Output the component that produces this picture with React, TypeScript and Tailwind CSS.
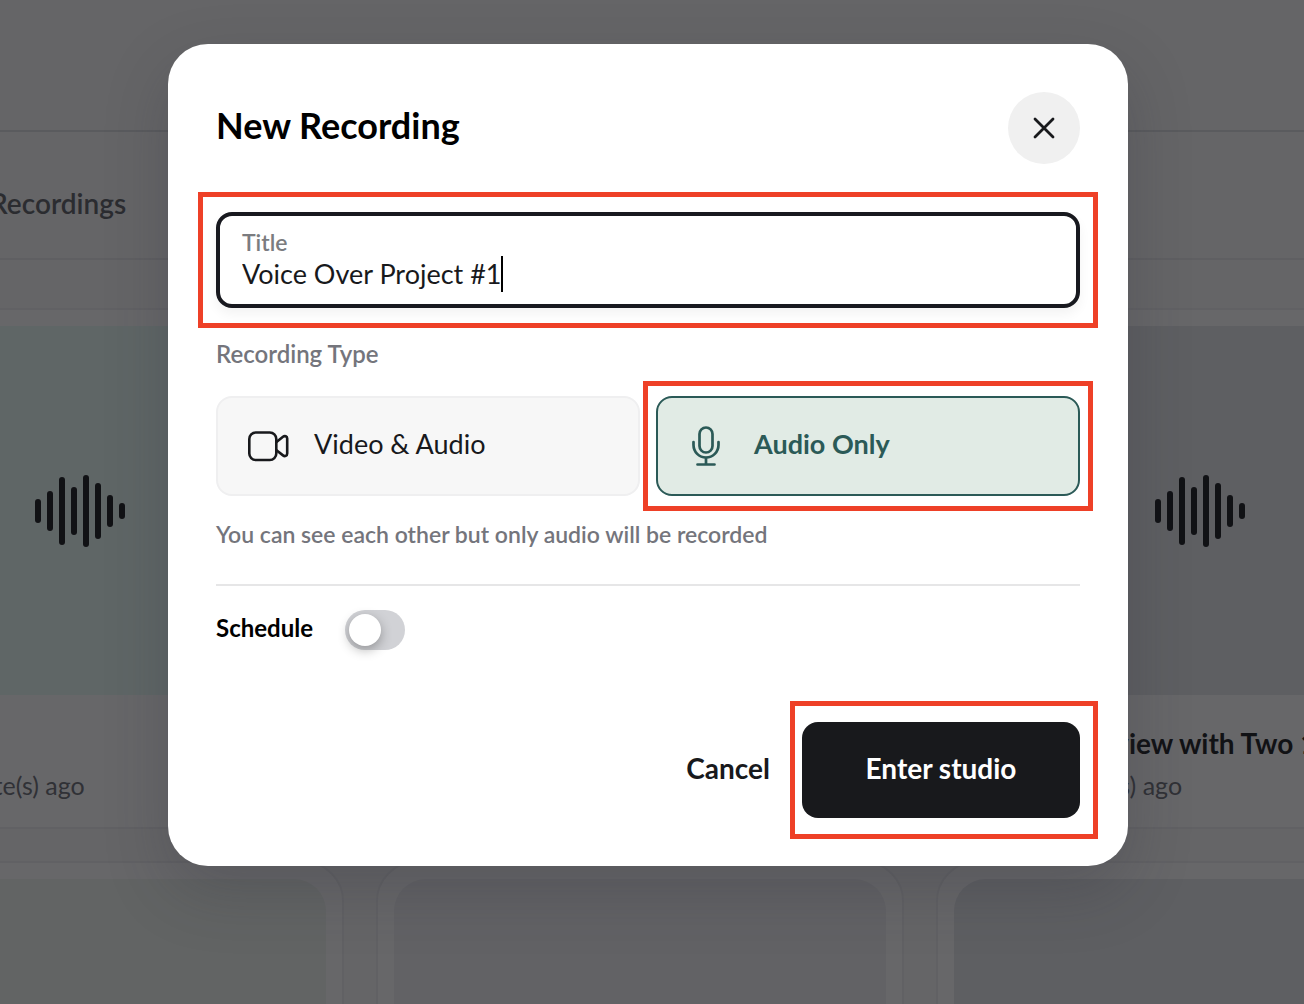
import React, { useState } from 'react';

type RecordingType = 'video' | 'audio';

interface Recording {
  id: number;
  title: string;
  age: string;
  thumbnail: string;
}

const RECORDINGS: Recording[] = [
  { id: 1, title: 'Recording', age: 'Added 7 minute(s) ago', thumbnail: 'bg-[#eafbf6]' },
  { id: 2, title: 'Podcast', age: '2 day(s) ago', thumbnail: 'bg-[#f3f3f8]' },
  { id: 3, title: 'Demos Interview with Two 1', age: 'Created 7 day(s) ago', thumbnail: 'bg-[#e6e8ec]' },
  { id: 4, title: 'Recording', age: '3 day(s) ago', thumbnail: 'bg-[#f1f6f1]' },
  { id: 5, title: 'Recording', age: '4 day(s) ago', thumbnail: 'bg-[#f0f1f4]' },
  { id: 6, title: 'Recording', age: '5 day(s) ago', thumbnail: 'bg-[#e6e8ec]' },
];

const WAVE_BARS = [24, 40, 68, 48, 72, 56, 32, 16];

const Waveform: React.FC = () => (
  <svg width="90" height="72" viewBox="0 0 90 72" fill="#18191c">
    {WAVE_BARS.map((height, index) => (
      <rect key={index} x={index * 12} y={36 - height / 2} width="6" height={height} rx="3" />
    ))}
  </svg>
);

const CameraIcon: React.FC = () => (
  <svg
    width="42"
    height="32"
    viewBox="0 0 42 32"
    fill="none"
    stroke="currentColor"
    strokeWidth="2.6"
    strokeLinecap="round"
    strokeLinejoin="round"
  >
    <rect x="1.3" y="2.5" width="27" height="27.500" rx="6.5" />
    <path d="M28.500 12l6.500-5.200c1.800-1.400 4.200-.5 4.200 1.800v15c0 2.300-2.400 3.200-4.200 1.800l-6.500-5.200" />
  </svg>
);

const MicIcon: React.FC = () => (
  <svg
    width="28"
    height="42"
    viewBox="0 0 28 42"
    fill="none"
    stroke="currentColor"
    strokeWidth="2.700"
    strokeLinecap="round"
  >
    <rect x="7.500" y="2.500" width="13" height="25" rx="6.500" />
    <path d="M1.500 17v3a12.500 12.500 0 0 0 25 0v-3" />
    <path d="M14 33v6M5.500 39.500h17" />
  </svg>
);

const CloseIcon: React.FC = () => (
  <svg width="24" height="24" viewBox="0 0 24 24" stroke="#18191c" strokeWidth="2.800" strokeLinecap="round">
    <path d="M3 3l18 18M21 3L3 21" />
  </svg>
);

const RecordingCard: React.FC<{ recording: Recording }> = ({ recording }) => (
  <article className="h-[521px] rounded-[40px] border-2 border-[#eeeff1] bg-white p-4">
    <div className={`flex h-[369px] items-center justify-center rounded-[32px] ${recording.thumbnail}`}>
      <Waveform />
    </div>
    <div className="px-1.5 pt-8 whitespace-nowrap">
      <h3 className="text-[28px] leading-8 font-bold text-[#18191c]">{recording.title}</h3>
      <p className="pt-3 text-[25px] leading-7 text-[#6b6e76]">{recording.age}</p>
    </div>
  </article>
);

const Library: React.FC = () => (
  <div className="h-full overflow-hidden bg-[#f8f9fa]">
    <header className="h-33 border-b-2 border-[#dcdde1]" />
    <nav className="flex h-32 items-center border-b-2 border-[#e8e9ec]">
      <a href="#recordings" className="-ml-2.5 pt-4 text-[28px] leading-8 font-semibold text-[#5c5f66]">
        Recordings
      </a>
    </nav>
    <main className="-ml-46 grid grid-cols-[repeat(3,528px)] gap-8 pt-12">
      {RECORDINGS.map((recording) => (
        <RecordingCard key={recording.id} recording={recording} />
      ))}
    </main>
  </div>
);

interface OptionProps {
  value: RecordingType;
  label: string;
  selected: boolean;
  onSelect: (value: RecordingType) => void;
  icon: React.ReactNode;
}

const TypeOption: React.FC<OptionProps> = ({ value, label, selected, onSelect, icon }) => (
  <label
    className={`flex h-25 cursor-pointer items-center rounded-2xl border-2 text-[27px] leading-8 ${
      selected
        ? 'gap-[34px] border-[#2b5a57] bg-[#e1ebe5] pl-[34px] font-bold text-[#2b5a57]'
        : 'gap-6 border-[#efeff0] bg-[#f7f7f7] pl-[30px] text-[#18191c]'
    }`}
  >
    <input
      type="radio"
      name="recording-type"
      value={value}
      checked={selected}
      onChange={() => onSelect(value)}
      className="sr-only"
    />
    {icon}
    <span className="pb-1">{label}</span>
  </label>
);

const NewRecordingDialog: React.FC = () => {
  const [title, setTitle] = useState('Voice Over Project #1');
  const [type, setType] = useState<RecordingType>('audio');
  const [scheduled, setScheduled] = useState(false);

  return (
    <form
      role="dialog"
      aria-labelledby="dialog-title"
      onSubmit={(event) => event.preventDefault()}
      className="w-full max-w-[960px] rounded-[40px] bg-white p-12 shadow-[0_24px_64px_rgba(40,42,56,0.24)]"
    >
      <div className="flex items-center justify-between">
        <h2 id="dialog-title" className="pb-1.5 text-4xl font-bold text-black">
          New Recording
        </h2>
        <button
          type="button"
          aria-label="Close"
          className="flex size-18 items-center justify-center rounded-full bg-[#f0f0f0]"
        >
          <CloseIcon />
        </button>
      </div>

      <div className="relative mt-12">
        <div className="h-24 rounded-2xl border-4 border-[#18191f] px-[22px] pt-3 shadow-[0_6px_12px_rgba(24,25,28,0.05)]">
          <label htmlFor="title" className="block text-[23px] leading-7 font-semibold text-[#7b7c80]">
            Title
          </label>
          <div className="flex h-9 items-center">
            <input
              id="title"
              value={title}
              onChange={(event) => setTitle(event.target.value)}
              className="field-sizing-content text-[27px] leading-9 text-[#18191c] outline-none"
            />
            <span className="h-9 w-0.5 bg-black" />
          </div>
        </div>
        <div className="pointer-events-none absolute -inset-x-[18px] -inset-y-5 border-5 border-[#ee4027]" />
      </div>

      <fieldset>
        <legend className="pt-8 pb-7 text-2xl leading-7 font-semibold text-[#74757c]">Recording Type</legend>
        <div className="grid grid-cols-2 gap-4">
          <TypeOption
            value="video"
            label="Video & Audio"
            selected={type === 'video'}
            onSelect={setType}
            icon={<CameraIcon />}
          />
          <div className="relative">
            <TypeOption
              value="audio"
              label="Audio Only"
              selected={type === 'audio'}
              onSelect={setType}
              icon={<MicIcon />}
            />
            <div className="pointer-events-none absolute -inset-x-[13px] -inset-y-[15px] border-5 border-[#ee4027]" />
          </div>
        </div>
      </fieldset>
      <p className="pt-6 pb-9 text-[23px] leading-7 font-semibold text-[#74757c]">
        You can see each other but only audio will be recorded
      </p>

      <div className="flex items-center gap-8 border-t-2 border-[#e6e6e7] pt-6">
        <label htmlFor="schedule" className="pb-1 text-2xl leading-7 font-bold text-black">
          Schedule
        </label>
        <input
          id="schedule"
          type="checkbox"
          role="switch"
          checked={scheduled}
          onChange={(event) => setScheduled(event.target.checked)}
          className="h-10 w-15 appearance-none rounded-full bg-[#d1d2d6] p-1 before:block before:size-8 before:rounded-full before:bg-white before:shadow-[0_4px_12px_rgba(0,0,0,0.3)] checked:bg-[#2b5a57] checked:before:ml-5"
        />
      </div>

      <div className="flex items-center justify-end gap-8 pt-18">
        <button type="button" className="pb-1 text-[28px] leading-8 font-bold text-[#18191c]">
          Cancel
        </button>
        <div className="relative">
          <button
            type="submit"
            className="h-24 w-[278px] rounded-2xl bg-[#18191c] pb-1 text-[28px] leading-8 font-bold text-white"
          >
            Enter studio
          </button>
          <div className="pointer-events-none absolute -inset-y-[21px] -right-[18px] -left-3 border-5 border-[#ee4027]" />
        </div>
      </div>
    </form>
  );
};

const App: React.FC = () => (
  <div className="relative h-screen overflow-hidden font-['Lato','Liberation_Sans',sans-serif]">
    <Library />
    <div className="absolute inset-0 flex items-start justify-center bg-[#0e0f12]/63 pt-11 pr-2">
      <NewRecordingDialog />
    </div>
  </div>
);

export default App;
